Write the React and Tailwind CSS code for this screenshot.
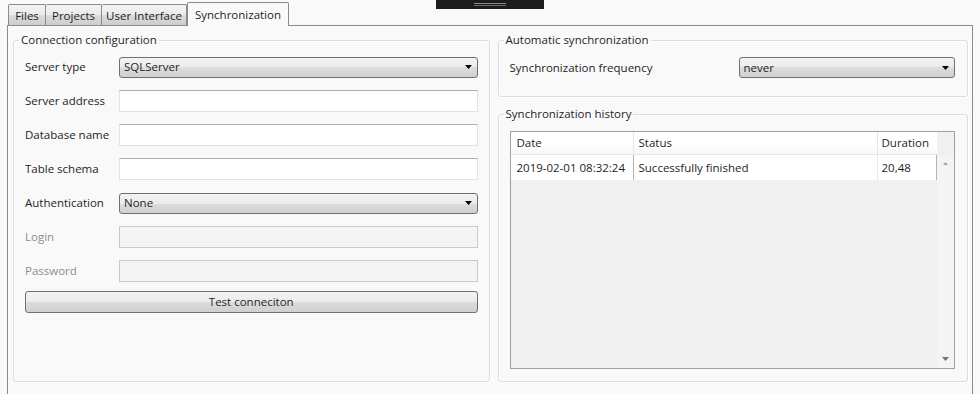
import React from "react";

const comboBg =
  "bg-[linear-gradient(#f3f3f3,#ebebeb_50%,#dddddd_50%,#cfcfcf)]";

function Arrow({ color = "#000" }) {
  return (
    <svg width="7" height="4" viewBox="0 0 7 4">
      <path d="M0 0 H7 L3.5 4 Z" fill={color} />
    </svg>
  );
}

function Combo({ value }) {
  return (
    <div
      className={`flex-1 h-[21px] flex items-center justify-between pl-[4px] pr-[5px] border border-[#707070] rounded-[3px] ${comboBg}`}
    >
      <span>{value}</span>
      <Arrow />
    </div>
  );
}

function TextBox({ disabled }) {
  return disabled ? (
    <div className="flex-1 h-[22px] border border-[#cacaca] bg-[#f4f4f4]" />
  ) : (
    <div className="flex-1 h-[22px] border border-[#e2e3ea] border-t-[#abadb3] bg-white" />
  );
}

function Row({ label, disabled, children }) {
  return (
    <div className="flex items-center h-[22px] mb-[12px]">
      <div className={`w-[94px] ${disabled ? "text-[#8d8d8d]" : "text-[#1e1e1e]"}`}>
        {label}
      </div>
      {children}
    </div>
  );
}

function Group({ title, className, children }) {
  return (
    <fieldset
      className={`border border-[#d5dfe5] rounded-[3px] shadow-[inset_1px_1px_0_#fff,1px_1px_0_#fff] ${className}`}
    >
      <legend className="ml-[-6px] px-[2px] leading-[16px] text-[#1e1e1e]">{title}</legend>
      {children}
    </fieldset>
  );
}

function Tab({ label, selected, width }) {
  if (selected) {
    return (
      <div className={`${width} h-[24px] mb-[-1px] pt-[4px] text-center bg-[#f9f9f9] border border-b-0 border-[#898c95] rounded-t-[2px] relative z-10`}>
        {label}
      </div>
    );
  }
  return (
    <div className={`${width} h-[21px] pt-[3px] text-center border border-b-0 border-l-0 first:border-l border-[#898c95] rounded-t-[2px] bg-[linear-gradient(#f3f3f3,#ebebeb_50%,#dddddd_50%,#cdcdcd)]`}>
      {label}
    </div>
  );
}

export default function App() {
  return (
    <div className="relative h-[394px] w-[980px] overflow-hidden bg-[#f9f9f9] font-['Open_Sans',sans-serif] text-[11.5px] leading-[16px] text-[#1e1e1e]">
      {/* capture bar */}
      <div className="absolute left-[436px] top-0 w-[108px] h-[9px] bg-[#1c1c1c] flex flex-col items-center justify-center gap-[1px]">
        <div className="w-[32px] h-[1px] bg-[#8a8a8a]" />
        <div className="w-[32px] h-[1px] bg-[#6a6a6a]" />
      </div>

      <div className="flex items-end pl-[8px] h-[25px]">
        <Tab label="Files" width="w-[38px]" />
        <Tab label="Projects" width="w-[56px]" />
        <Tab label="User Interface" width="w-[85px]" />
        <Tab label="Synchronization" width="w-[102px]" selected />
      </div>

      <div className="mx-[7px] h-[400px] border border-[#898c95] bg-[#f9f9f9] flex gap-[8px] pl-[5px] pr-[4px] pt-[6px]">
        <Group title="Connection configuration" className="w-[477px] h-[350px] px-[11px] pt-[8px]">
          <Row label="Server type">
            <Combo value="SQLServer" />
          </Row>
          <Row label="Server address">
            <TextBox />
          </Row>
          <Row label="Database name">
            <TextBox />
          </Row>
          <Row label="Table schema">
            <TextBox />
          </Row>
          <Row label="Authentication">
            <Combo value="None" />
          </Row>
          <Row label="Login" disabled>
            <TextBox disabled />
          </Row>
          <Row label="Password" disabled>
            <TextBox disabled />
          </Row>
          <div
            className={`h-[22px] mt-[-3px] flex items-center justify-center border border-[#707070] rounded-[3px] ${comboBg}`}
          >
            Test conneciton
          </div>
        </Group>

        <div className="w-[471px] flex flex-col gap-[9px]">
          <Group title="Automatic synchronization" className="h-[65px] pl-[11px] pr-[12px] pt-[9px]">
            <div className="flex items-center h-[21px]">
              <div className="w-[229px]">Synchronization frequency</div>
              <Combo value="never" />
            </div>
          </Group>

          <Group title="Synchronization history" className="h-[276px] pl-[11px] pr-[12px] pt-[9px]">
            <div className="h-[238px] border border-[#a0a0a0] bg-[#f0f0f0] flex">
              <div className="flex-1 flex flex-col">
                <div className="flex h-[23px] bg-[linear-gradient(#ffffff,#ffffff_60%,#f6f7f8)] border-b border-[#e5e5e5]">
                  <div className="w-[123px] pl-[6px] flex items-center border-r border-[#e5e5e5]">Date</div>
                  <div className="w-[244px] pl-[5px] flex items-center border-r border-[#e5e5e5]">Status</div>
                  <div className="flex-1 pl-[4px] flex items-center">Duration</div>
                </div>
                <div className="flex h-[25px] bg-white">
                  <div className="w-[123px] pl-[6px] flex items-center border-r border-[#b4b4b4]">2019-02-01 08:32:24</div>
                  <div className="w-[244px] pl-[5px] flex items-center border-r border-[#e8e8e8]">Successfully finished</div>
                  <div className="flex-1 pl-[4px] flex items-center border-r border-[#b4b4b4]">20,48</div>
                </div>
              </div>
              <div className="w-[17px] flex flex-col">
                <div className="h-[23px]" />
                <div className="flex-1 bg-[#f4f4f4] flex flex-col items-center justify-between py-[7px]">
                  <svg width="5" height="3" viewBox="0 0 5 3">
                    <path d="M0 3 H5 L2.5 0 Z" fill="#a3a3a3" />
                  </svg>
                  <svg width="7" height="4" viewBox="0 0 7 4">
                    <path d="M0 0 H7 L3.5 4 Z" fill="#707070" />
                  </svg>
                </div>
              </div>
            </div>
          </Group>
        </div>
      </div>
    </div>
  );
}
